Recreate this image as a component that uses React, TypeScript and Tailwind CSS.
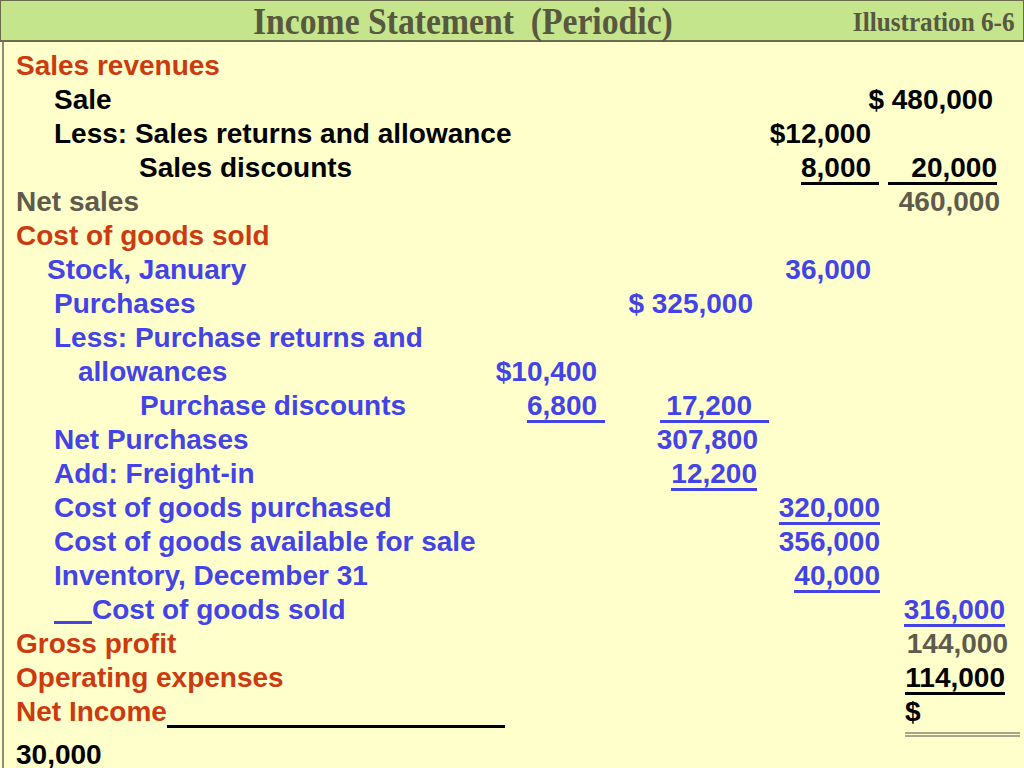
import type { ReactNode } from "react";

const Row = ({ children, className = "" }: { children: ReactNode; className?: string }) => (
  <div className={`grid grid-cols-[466px_140px_160px_112px_128px] h-[34px] leading-[34px] whitespace-nowrap ${className}`}>
    {children}
  </div>
);

export default function App() {
  return (
    <div className="min-h-screen w-[1024px] bg-[#ffffcc] font-['Liberation_Sans',Arial,sans-serif] font-bold text-[28px]">
      <header className="h-[42px] flex bg-[#c4e58c] border border-b-2 border-[#6b6b4e] text-[#58573f] font-['Liberation_Serif','Times_New_Roman',serif]">
        <h1 className="pl-[252px] pt-[2px] text-[38px] leading-[36px] font-bold whitespace-pre scale-x-[0.886] origin-[252px_50%]">Income Statement  (Periodic)</h1>
        <span className="ml-auto pr-[9px] pt-[4px] text-[28px] leading-[34px] font-bold scale-x-[0.9] origin-right">Illustration 6-6</span>
      </header>

      <div className="ml-[2px] border-l-2 border-[#8c8c80] pt-[7px] min-h-[726px]">
        <Row className="text-[#cc3a10]">
          <div className="pl-[12px]">Sales revenues</div>
        </Row>
        <Row className="text-black">
          <div className="pl-[50px]">Sale</div>
          <div className="col-start-5 flex justify-end pr-[17px]">$ 480,000</div>
        </Row>
        <Row className="text-black">
          <div className="pl-[50px]">Less: Sales returns and allowance</div>
          <div className="col-start-4 flex justify-end pr-[11px]">$12,000</div>
        </Row>
        <Row className="text-black">
          <div className="pl-[135px]">Sales discounts</div>
          <div className="col-start-4 text-right pr-[3px]">
            <span className="inline-block w-[78px] pr-[9px] leading-none border-b-[3px] border-current">8,000</span>
          </div>
          <div className="col-start-5 text-right pr-[13px]">
            <span className="inline-block w-[109px] leading-none border-b-[3px] border-current">20,000</span>
          </div>
        </Row>
        <Row className="text-[#5e5b4c]">
          <div className="pl-[12px]">Net sales</div>
          <div className="col-start-5 flex justify-end pr-[10px]">460,000</div>
        </Row>
        <Row className="text-[#cc3a10]">
          <div className="pl-[12px]">Cost of goods sold</div>
        </Row>
        <Row className="text-[#4343e6]">
          <div className="pl-[43px]">Stock, January</div>
          <div className="col-start-4 flex justify-end pr-[11px]">36,000</div>
        </Row>
        <Row className="text-[#4343e6]">
          <div className="pl-[50px]">Purchases</div>
          <div className="col-start-3 flex justify-end pr-[17px]">$ 325,000</div>
        </Row>
        <Row className="text-[#4343e6]">
          <div className="pl-[50px]">Less: Purchase returns and</div>
        </Row>
        <Row className="text-[#4343e6]">
          <div className="pl-[74px]">allowances</div>
          <div className="col-start-2 flex justify-end pr-[13px]">$10,400</div>
        </Row>
        <Row className="text-[#4343e6]">
          <div className="pl-[136px]">Purchase discounts</div>
          <div className="col-start-2 text-right pr-[5px]">
            <span className="inline-block w-[78px] pr-[8px] leading-none border-b-[3px] border-current">6,800</span>
          </div>
          <div className="col-start-3 text-right pr-[1px]">
            <span className="inline-block w-[109px] pr-[17px] leading-none border-b-[3px] border-current">17,200</span>
          </div>
        </Row>
        <Row className="text-[#4343e6]">
          <div className="pl-[50px]">Net Purchases</div>
          <div className="col-start-3 flex justify-end pr-[12px]">307,800</div>
        </Row>
        <Row className="text-[#4343e6]">
          <div className="pl-[50px]">Add: Freight-in</div>
          <div className="col-start-3 text-right pr-[13px]">
            <span className="inline-block leading-none border-b-[3px] border-current">12,200</span>
          </div>
        </Row>
        <Row className="text-[#4343e6]">
          <div className="pl-[50px]">Cost of goods purchased</div>
          <div className="col-start-4 text-right pr-[2px]">
            <span className="inline-block leading-none border-b-[3px] border-current">320,000</span>
          </div>
        </Row>
        <Row className="text-[#4343e6]">
          <div className="pl-[50px]">Cost of goods available for sale</div>
          <div className="col-start-4 flex justify-end pr-[2px]">356,000</div>
        </Row>
        <Row className="text-[#4343e6]">
          <div className="pl-[50px]">Inventory, December 31</div>
          <div className="col-start-4 text-right pr-[2px]">
            <span className="inline-block leading-none border-b-[3px] border-current">40,000</span>
          </div>
        </Row>
        <Row className="text-[#4343e6]">
          <div className="pl-[50px]">
            <span className="inline-block w-[38px] border-b-[3px] border-current align-[-5px]"></span>
            Cost of goods sold
          </div>
          <div className="col-start-5 text-right pr-[5px]">
            <span className="inline-block leading-none border-b-[3px] border-current">316,000</span>
          </div>
        </Row>
        <Row className="text-[#cc3a10]">
          <div className="pl-[12px]">Gross profit</div>
          <div className="col-start-5 flex justify-end pr-[2px] text-[#5e5b4c]">144,000</div>
        </Row>
        <Row className="text-[#cc3a10]">
          <div className="pl-[12px]">Operating expenses</div>
          <div className="col-start-5 text-right pr-[5px] text-black">
            <span className="inline-block leading-none border-b-[3px] border-current">114,000</span>
          </div>
        </Row>
        <Row className="text-[#cc3a10]">
          <div className="pl-[12px]">
            Net Income
            <span className="inline-block w-[338px] border-b-[3px] border-black align-[-7px]"></span>
          </div>
          <div className="col-start-5 pl-[23px] text-black">
            <span className="inline-block w-[115px] leading-none pb-[6px] border-b-[5px] border-double border-[#a9a58c]">$</span>
          </div>
        </Row>
        <Row className="text-black mt-[9px]">
          <div className="pl-[12px]">30,000</div>
        </Row>
      </div>
    </div>
  );
}
